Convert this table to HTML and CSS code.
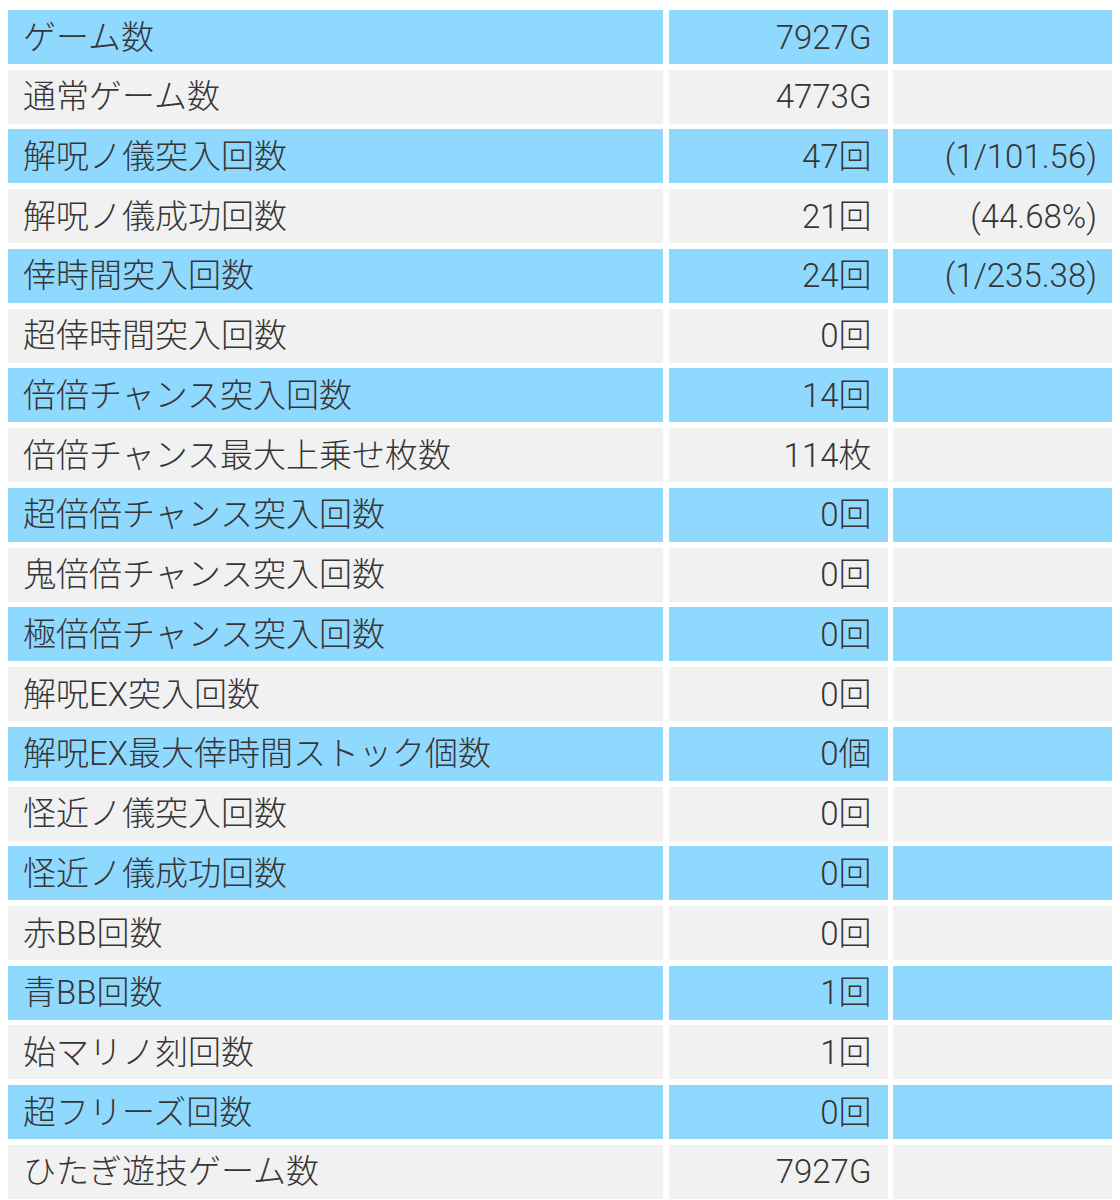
FILE: index.html
```html
<!DOCTYPE html>
<html lang="ja">
<head>
<meta charset="utf-8">
<link rel="stylesheet" href="styles.css">
</head>
<body>
<div class="table">
  <div class="row blue"><div class="c name">ゲーム数</div><div class="c val">7927G</div><div class="c extra"></div></div>
  <div class="row gray"><div class="c name">通常ゲーム数</div><div class="c val">4773G</div><div class="c extra"></div></div>
  <div class="row blue"><div class="c name">解呪ノ儀突入回数</div><div class="c val">47回</div><div class="c extra">(1/101.56)</div></div>
  <div class="row gray"><div class="c name">解呪ノ儀成功回数</div><div class="c val">21回</div><div class="c extra">(44.68%)</div></div>
  <div class="row blue"><div class="c name">倖時間突入回数</div><div class="c val">24回</div><div class="c extra">(1/235.38)</div></div>
  <div class="row gray"><div class="c name">超倖時間突入回数</div><div class="c val">0回</div><div class="c extra"></div></div>
  <div class="row blue"><div class="c name">倍倍チャンス突入回数</div><div class="c val">14回</div><div class="c extra"></div></div>
  <div class="row gray"><div class="c name">倍倍チャンス最大上乗せ枚数</div><div class="c val">114枚</div><div class="c extra"></div></div>
  <div class="row blue"><div class="c name">超倍倍チャンス突入回数</div><div class="c val">0回</div><div class="c extra"></div></div>
  <div class="row gray"><div class="c name">鬼倍倍チャンス突入回数</div><div class="c val">0回</div><div class="c extra"></div></div>
  <div class="row blue"><div class="c name">極倍倍チャンス突入回数</div><div class="c val">0回</div><div class="c extra"></div></div>
  <div class="row gray"><div class="c name">解呪EX突入回数</div><div class="c val">0回</div><div class="c extra"></div></div>
  <div class="row blue"><div class="c name">解呪EX最大倖時間ストック個数</div><div class="c val">0個</div><div class="c extra"></div></div>
  <div class="row gray"><div class="c name">怪近ノ儀突入回数</div><div class="c val">0回</div><div class="c extra"></div></div>
  <div class="row blue"><div class="c name">怪近ノ儀成功回数</div><div class="c val">0回</div><div class="c extra"></div></div>
  <div class="row gray"><div class="c name">赤BB回数</div><div class="c val">0回</div><div class="c extra"></div></div>
  <div class="row blue"><div class="c name">青BB回数</div><div class="c val">1回</div><div class="c extra"></div></div>
  <div class="row gray"><div class="c name">始マリノ刻回数</div><div class="c val">1回</div><div class="c extra"></div></div>
  <div class="row blue"><div class="c name">超フリーズ回数</div><div class="c val">0回</div><div class="c extra"></div></div>
  <div class="row gray"><div class="c name">ひたぎ遊技ゲーム数</div><div class="c val">7927G</div><div class="c extra"></div></div>
</div>
</body>
</html>
```
FILE: styles.css
```css
html, body {
  margin: 0;
  padding: 0;
  background: #ffffff;
}
body {
  font-family: Roboto, "Noto Sans CJK JP", sans-serif;
  color: #363636;
}
.table {
  padding: 10px 8px 0 8px;
  display: grid;
  grid-auto-rows: 54px;
  row-gap: 5.74px;
}
.row {
  display: grid;
  grid-template-columns: 655px 219px 219px;
  column-gap: 5.5px;
}
.c {
  display: flex;
  align-items: center;
  font-size: 33px;
  font-weight: 300;
  line-height: 1;
  white-space: nowrap;
}
.name {
  padding-left: 15px;
}
.val, .extra {
  justify-content: flex-end;
  padding-right: 16px;
}
.extra {
  padding-right: 15px;
}
.blue .c {
  background: #90d9fe;
}
.gray .c {
  background: #f1f1f1;
}
```
